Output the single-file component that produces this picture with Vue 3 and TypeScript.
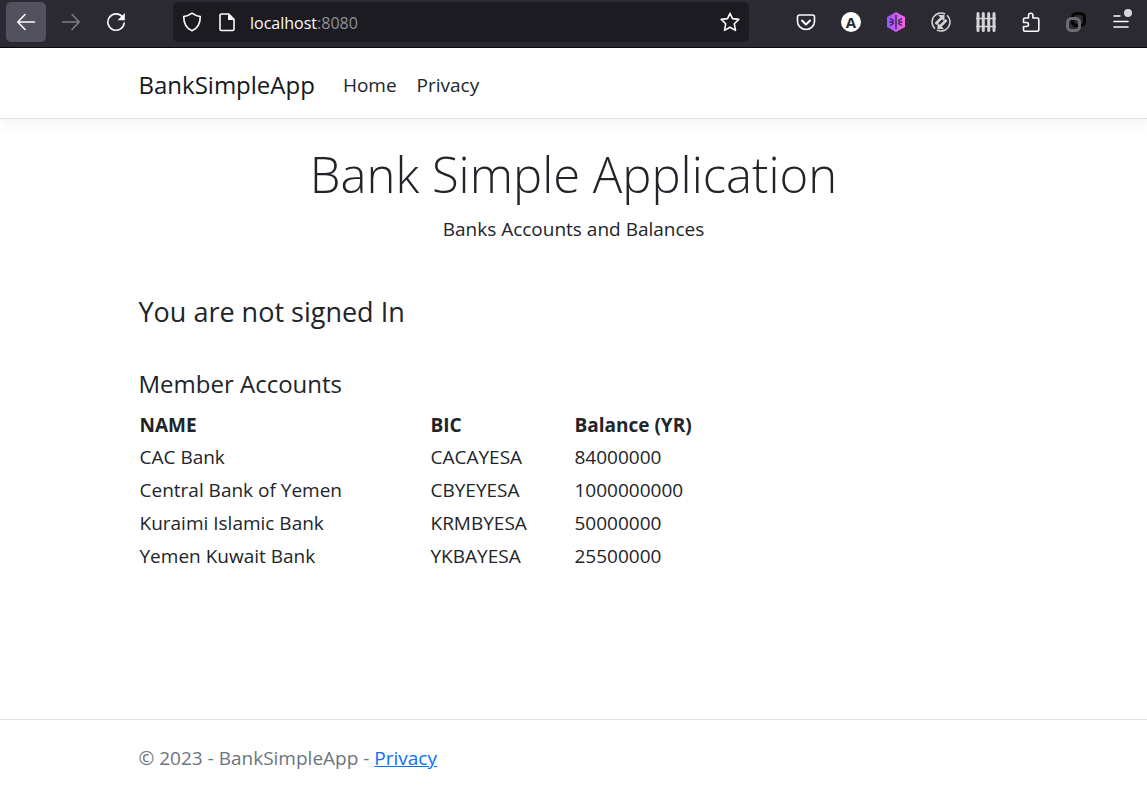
<script setup lang="ts">
interface Account {
  name: string
  bic: string
  balance: number
}

const accounts: Account[] = [
  { name: 'CAC Bank', bic: 'CACAYESA', balance: 84000000 },
  { name: 'Central Bank of Yemen', bic: 'CBYEYESA', balance: 1000000000 },
  { name: 'Kuraimi Islamic Bank', bic: 'KRMBYESA', balance: 50000000 },
  { name: 'Yemen Kuwait Bank', bic: 'YKBAYESA', balance: 25500000 },
]
</script>

<template>
  <div class="window">
    <div class="toolbar">
      <div class="nav-buttons">
        <button class="tool active" aria-label="Back">
          <svg viewBox="0 0 20 20"><path d="M18.5 10H2M9 2.5 1.8 10 9 17.500" /></svg>
        </button>
        <button class="tool dim" aria-label="Forward">
          <svg viewBox="0 0 20 20"><path d="M1.500 10H18M11 2.500 18.200 10 11 17.500" /></svg>
        </button>
        <button class="tool" aria-label="Reload">
          <svg viewBox="0 0 20 20">
            <path d="M16.500 5A8.200 8.200 0 1 0 18.200 11" />
            <path class="solid" d="M18.800 1v7.200h-7.200z" />
          </svg>
        </button>
      </div>
      <div class="address">
        <svg viewBox="0 0 20 20"><path d="M10 1.200c2.600 2 5.200 3 8.300 3.400 0 6-1.600 11.500-8.300 14.200C3.300 16.100 1.700 10.600 1.700 4.600 4.800 4.200 7.400 3.200 10 1.200z" /></svg>
        <svg viewBox="0 0 20 20">
          <path d="M4.500 2h7.300l5.200 5.200v9.800a1.500 1.500 0 0 1-1.500 1.500h-11A1.500 1.500 0 0 1 3 17V3.500A1.500 1.500 0 0 1 4.500 2z" />
          <path class="solid" d="M11 1.500V8h6.500z" />
        </svg>
        <span class="url">localhost<span class="port">:8080</span></span>
        <button class="star" aria-label="Bookmark this page">
          <svg viewBox="0 0 20 20"><path d="M10 1.300 12.500 6.600 18.800 7.400 14.300 11.800 15.500 18.400 10 15.300 4.500 18.400 5.700 11.800 1.200 7.400 7.500 6.600z" /></svg>
        </button>
      </div>
      <div class="extensions">
        <button class="tool" aria-label="Pocket">
          <svg viewBox="0 0 20 20"><path d="M3.500 3h13a2 2 0 0 1 2 2v4.500c0 4.500-4 8-8.500 8s-8.500-3.500-8.500-8V5a2 2 0 0 1 2-2z" /><path class="heavy" d="m6 8.500 4 4 4-4" /></svg>
        </button>
        <button class="tool" aria-label="Account">
          <span class="letter">A</span>
        </button>
        <button class="tool" aria-label="Snowflake extension">
          <svg viewBox="0 0 20 20">
            <defs><linearGradient id="hex" x2="1"><stop stop-color="#9059ff" /><stop offset="1" stop-color="#ff61e5" /></linearGradient></defs>
            <path class="hex" fill="url(#hex)" d="M10 0 19 5v10l-9 5-9-5V5z" />
            <path class="flake" d="M10 3.500v13M4.500 6.800l3 1.700M4.500 13.200l3-1.700M15.500 6.800l-3 1.700M15.500 13.200l-3-1.700M4 10h3M13 10h3" />
          </svg>
        </button>
        <button class="tool soft" aria-label="Sync">
          <svg viewBox="0 0 20 20">
            <path d="M13.500 1.700A9 9 0 0 0 3.500 16.200M6.500 18.300A9 9 0 0 0 16.500 3.800" />
            <path class="shaft" d="M4.500 12 10.500 6M9.500 14l6-6" />
            <path class="solid" d="M7 3h6.500v6.500zM6.500 10.500v6.500h6.500z" />
          </svg>
        </button>
        <button class="tool soft" aria-label="Fence">
          <svg viewBox="0 0 20 20">
            <path class="thin" d="M0.500 6.500h19M0.500 14.500h19" />
            <path class="picket" d="M2 1.500v17M7.300 1.500v17M12.700 1.500v17M18 1.500v17" />
          </svg>
        </button>
        <button class="tool" aria-label="Extensions">
          <svg viewBox="0 0 20 20"><path d="M7.500 6V3.500a2.200 2.200 0 0 1 4.400 0V6h4.400a1.500 1.500 0 0 1 1.500 1.500v10.200a1.500 1.500 0 0 1-1.500 1.500H4a1.500 1.500 0 0 1-1.500-1.500v-3.200h3a2 2 0 0 0 0-4h-3v-3A1.500 1.500 0 0 1 4 6z" /></svg>
        </button>
        <button class="tool" aria-label="Links">
          <svg viewBox="0 0 20 20">
            <rect class="ring-dark" x="6.500" y="1.500" width="12" height="12" rx="4" />
            <rect class="ring-gray" x="1.500" y="6.500" width="12" height="12" rx="4" />
            <path class="ring-dark" d="M6.500 8.500v1a4 4 0 0 0 4 4h1" />
          </svg>
        </button>
        <button class="tool menu" aria-label="Open application menu">
          <svg viewBox="0 0 20 20"><path d="M3 4h6M3 9.500h14M3 15h14" /></svg>
          <span class="dot"></span>
        </button>
      </div>
    </div>

    <header class="site-header">
      <nav class="container">
        <a class="brand" href="#">BankSimpleApp</a>
        <a href="#">Home</a>
        <a href="#">Privacy</a>
      </nav>
    </header>

    <main class="container">
      <div class="intro">
        <h1>Bank Simple Application</h1>
        <p>Banks Accounts and Balances</p>
      </div>
      <h2>You are not signed In</h2>
      <h3 id="accounts-title">Member Accounts</h3>
      <table aria-labelledby="accounts-title">
        <thead>
          <tr>
            <th class="name" scope="col">NAME</th>
            <th class="bic" scope="col">BIC</th>
            <th scope="col">Balance (YR)</th>
          </tr>
        </thead>
        <tbody>
          <tr v-for="account in accounts" :key="account.bic">
            <td>{{ account.name }}</td>
            <td>{{ account.bic }}</td>
            <td>{{ account.balance }}</td>
          </tr>
        </tbody>
      </table>
    </main>

    <footer>
      <div class="container">© 2023 - BankSimpleApp - <a href="#">Privacy</a></div>
    </footer>
  </div>
</template>

<style>
body {
  margin: 0;
}
</style>

<style scoped>
* {
  box-sizing: border-box;
}
.window {
  min-height: 100vh;
  display: flex;
  flex-direction: column;
  background: #fff;
  color: #212529;
  font: 19px/30px "Segoe UI", "Open Sans", "Noto Sans", sans-serif;
}
.toolbar {
  height: 48px;
  padding: 0 6px 4px;
  display: flex;
  align-items: center;
  background: #2b2a33;
  border-bottom: 1px solid #0c0c0d;
}
button {
  padding: 0;
  border: 0;
  background: none;
  color: inherit;
  font: inherit;
}
svg {
  display: block;
  width: 20px;
  height: 20px;
  flex: none;
  fill: none;
  stroke: currentColor;
  stroke-width: 1.6;
  stroke-linecap: round;
  stroke-linejoin: round;
}
.nav-buttons {
  display: flex;
  gap: 5px;
  width: 167px;
  flex: none;
}
.tool {
  width: 40px;
  height: 40px;
  display: flex;
  align-items: center;
  justify-content: center;
  border-radius: 5px;
  color: #fbfbfe;
}
.active {
  background: #52525e;
}
.dim {
  color: #7c7b82;
}
.soft {
  color: #d4d4d4;
}
.solid {
  fill: currentColor;
  stroke: none;
}
.heavy {
  stroke-width: 2;
}
.shaft {
  stroke-width: 2.5;
  stroke-linecap: butt;
}
.thin {
  stroke-width: 1.5;
}
.picket {
  stroke-width: 3;
}
.hex {
  stroke: none;
}
.flake {
  stroke: #2b2146;
  stroke-width: 1.3;
}
.ring-dark {
  stroke: #050505;
  stroke-width: 3;
  stroke-linecap: butt;
}
.ring-gray {
  stroke: #6b6b70;
  stroke-width: 3;
}
.address {
  flex: 1;
  height: 40px;
  padding: 0 9px;
  display: flex;
  align-items: center;
  gap: 15px;
  background: #1c1b22;
  border-radius: 5px;
  color: #fbfbfe;
}
.url {
  flex: 1;
  padding-top: 2px;
  margin-left: -2px;
  font-size: 16px;
}
.port {
  color: #8f8f96;
}
.extensions {
  display: flex;
  gap: 5px;
  margin-left: 37px;
}
.letter {
  width: 20px;
  height: 20px;
  border-radius: 50%;
  background: #fff;
  color: #2b2a33;
  font-size: 15px;
  font-weight: 700;
  line-height: 20px;
}
.menu {
  position: relative;
}
.dot {
  position: absolute;
  top: 7px;
  right: 9px;
  width: 8px;
  height: 8px;
  border-radius: 50%;
  background: #d7d7db;
}
.container {
  width: 100%;
  max-width: 900px;
  margin: 0 auto;
  padding: 0 15px;
}
.site-header {
  padding: 18px 0 14px;
  border-bottom: 1px solid #dee2e6;
  box-shadow: 0 5px 15px rgba(0, 0, 0, 0.05);
}
nav {
  display: flex;
  align-items: center;
  gap: 20px;
  line-height: 38px;
}
nav a {
  color: #212529;
  text-decoration: none;
}
.brand {
  margin-right: 8px;
  color: #16191c;
  font-size: 24px;
}
main {
  flex: 1;
}
.intro {
  padding-top: 25px;
  text-align: center;
}
h1 {
  margin: 0 0 10px;
  font-size: 49px;
  font-weight: 300;
  line-height: 60px;
}
p {
  margin: 0;
}
h2 {
  margin: 50px 0 39px;
  font-size: 27px;
  font-weight: 400;
  line-height: 36px;
}
h3 {
  margin: 0 0 10px;
  font-size: 24px;
  font-weight: 400;
  line-height: 30px;
}
table {
  border-collapse: collapse;
}
th,
td {
  padding: 1px;
  text-align: left;
}
td {
  padding-bottom: 2px;
}
.name {
  width: 291px;
}
.bic {
  width: 144px;
}
footer {
  border-top: 1px solid #dee2e6;
  padding-top: 4px;
  line-height: 68px;
  color: #6c757d;
}
footer a {
  color: #0d6efd;
}
</style>
